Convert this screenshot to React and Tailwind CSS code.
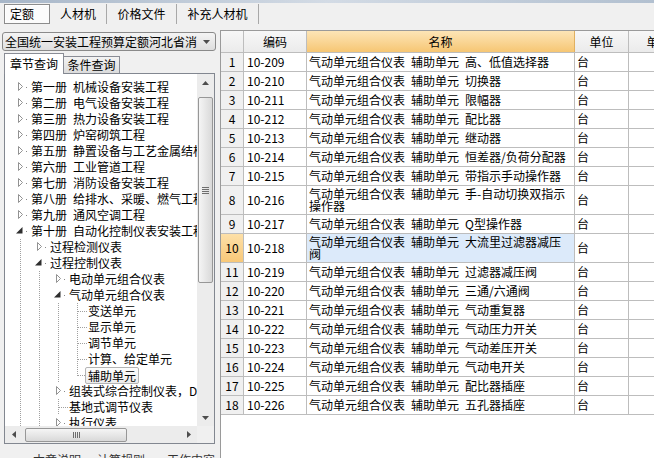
import React from 'react';

const names = [
  ['10-209', '高、低值选择器'],
  ['10-210', '切换器'],
  ['10-211', '限幅器'],
  ['10-212', '配比器'],
  ['10-213', '继动器'],
  ['10-214', '恒差器/负荷分配器'],
  ['10-215', '带指示手动操作器'],
  ['10-216', '手-自动切换双指示', '操作器'],
  ['10-217', 'Q型操作器'],
  ['10-218', '大流里过滤器减压', '阀'],
  ['10-219', '过滤器减压阀'],
  ['10-220', '三通/六通阀'],
  ['10-221', '气动重复器'],
  ['10-222', '气动压力开关'],
  ['10-223', '气动差压开关'],
  ['10-224', '气动电开关'],
  ['10-225', '配比器插座'],
  ['10-226', '五孔器插座'],
];

const PREFIX = '气动单元组合仪表\u2002辅助单元\u2002';

// c = collapsed, e = expanded, l = leaf, z = last leaf
const tree = [
  { d: 1, k: 'c', t: '第一册\u2002机械设备安装工程' },
  { d: 1, k: 'c', t: '第二册\u2002电气设备安装工程' },
  { d: 1, k: 'c', t: '第三册\u2002热力设备安装工程' },
  { d: 1, k: 'c', t: '第四册\u2002炉窑砌筑工程' },
  { d: 1, k: 'c', t: '第五册\u2002静置设备与工艺金属结构制作安装工程' },
  { d: 1, k: 'c', t: '第六册\u2002工业管道工程' },
  { d: 1, k: 'c', t: '第七册\u2002消防设备安装工程' },
  { d: 1, k: 'c', t: '第八册\u2002给排水、采暖、燃气工程' },
  { d: 1, k: 'c', t: '第九册\u2002通风空调工程' },
  { d: 1, k: 'e', t: '第十册\u2002自动化控制仪表安装工程' },
  { d: 2, k: 'c', t: '过程检测仪表' },
  { d: 2, k: 'e', t: '过程控制仪表' },
  { d: 3, k: 'c', t: '电动单元组合仪表' },
  { d: 3, k: 'e', t: '气动单元组合仪表' },
  { d: 4, k: 'l', t: '变送单元' },
  { d: 4, k: 'l', t: '显示单元' },
  { d: 4, k: 'l', t: '调节单元' },
  { d: 4, k: 'l', t: '计算、给定单元' },
  { d: 4, k: 'z', t: '辅助单元', sel: true },
  { d: 3, k: 'c', t: '组装式综合控制仪表，DDZ-S系列仪表' },
  { d: 3, k: 'l', t: '基地式调节仪表' },
  { d: 3, k: 'c', t: '执行仪表' },
];

function Guide() {
  return (
    <svg width="19" height="16" className="shrink-0">
      <line x1="9.5" y1="0" x2="9.5" y2="16" stroke="#a0a0a0" strokeDasharray="1 1" />
    </svg>
  );
}

function Joint({ k }) {
  return (
    <svg width="19" height="16" className="shrink-0">
      {k === 'c' && (
        <>
          <path d="M7.5 3.5 L11.5 7.5 L7.5 11.5 Z" fill="#fff" stroke="#929292" />
          <rect x="15" y="8" width="1" height="1" fill="#8a8a8a" />
        </>
      )}
      {k === 'e' && (
        <>
          <path d="M11.5 4 L11.5 10.5 L5 10.5 Z" fill="#2e2e2e" />
          <rect x="15" y="8" width="1" height="1" fill="#8a8a8a" />
        </>
      )}
      {(k === 'l' || k === 'z') && (
        <>
          <line x1="9.5" y1="0" x2="9.5" y2={k === 'z' ? 9 : 16} stroke="#a0a0a0" strokeDasharray="1 1" />
          <line x1="10" y1="8.5" x2="19" y2="8.5" stroke="#a0a0a0" strokeDasharray="1 1" />
        </>
      )}
    </svg>
  );
}

function TreeRow({ node }) {
  const guides = [];
  for (let i = 1; i < node.d; i++) guides.push(<Guide key={i} />);
  return (
    <div className="flex h-[16px] shrink-0 items-center pl-[6px] whitespace-pre">
      {guides}
      <Joint k={node.k} />
      {node.sel ? (
        <span className="-ml-[2px] px-[2px] leading-[15px] border border-[#b4b4b4] rounded-[2px] bg-gradient-to-b from-[#fdfdfd] to-[#ececec]">
          {node.t}
        </span>
      ) : (
        <span className="pl-[1px] leading-[16px]">{node.t}</span>
      )}
    </div>
  );
}

function Arrow({ dir }) {
  const d = {
    up: 'M0 4 L3.5 0 L7 4 Z',
    down: 'M0 0 L7 0 L3.5 4 Z',
    left: 'M4 0 L4 7 L0 3.5 Z',
    right: 'M0 0 L4 3.5 L0 7 Z',
  }[dir];
  const v = dir === 'up' || dir === 'down';
  return (
    <svg width={v ? 7 : 4} height={v ? 4 : 7} className="shrink-0">
      <path d={d} fill="#4d4d4d" />
    </svg>
  );
}

function TableRow({ n, code, a, b }) {
  const sel = n === 10;
  const tall = !!b;
  return (
    <div className={`flex shrink-0 border-b border-[#bdbdbd] ${tall ? 'h-[29px]' : 'h-[19px]'}`}>
      <div
        className={`w-[23px] shrink-0 flex items-center justify-center border-r border-[#bdbdbd] ${
          sel ? 'bg-gradient-to-b from-[#fde0a8] to-[#f8c878]' : 'bg-[#f0f0f0]'
        }`}
      >
        {n}
      </div>
      <div className="w-[63px] shrink-0 flex items-center pl-[3px] border-r border-[#bdbdbd]">{code}</div>
      <div
        className={`w-[268px] shrink-0 flex items-center pl-[2px] border-r border-[#bdbdbd] whitespace-pre ${
          sel ? 'bg-[#dceafa]' : ''
        }`}
      >
        {tall ? (
          <div className="leading-[12px]">
            {PREFIX + a}
            <br />
            {b}
          </div>
        ) : (
          <span>{PREFIX + a}</span>
        )}
      </div>
      <div className="w-[54px] shrink-0 flex items-center pl-[2px] border-r border-[#bdbdbd]">台</div>
      <div className="w-[60px] shrink-0 border-r border-[#bdbdbd]"></div>
    </div>
  );
}

export default function App() {
  return (
    <div className="w-[654px] h-[458px] overflow-hidden bg-[#f0f0f0] text-[12px] text-black font-['Noto_Sans_CJK_SC',sans-serif] flex flex-col">
      {/* window edge */}
      <div className="h-[3px] shrink-0 bg-gradient-to-r from-[#a7b6c8] via-[#d3dbe5] to-[#b2c0d0]"></div>

      {/* top tabs */}
      <div className="h-[24px] shrink-0 flex items-start pt-[1px] pl-[4px]">
        <div className="w-[46px] h-[20px] pl-[5px] flex items-center border border-[#8c8c8c] bg-[#fbfbfb] shadow-[inset_1px_1px_0_#ffffff]">定额</div>
        <div className="w-[57px] h-[20px] flex items-center justify-center border-r border-[#a8a8a8]">人材机</div>
        <div className="w-[70px] h-[20px] flex items-center justify-center border-r border-[#a8a8a8]">价格文件</div>
        <div className="w-[82px] h-[20px] flex items-center justify-center border-r border-[#a8a8a8]">补充人材机</div>
      </div>

      <div className="flex flex-1 min-h-0">
        {/* left panel */}
        <div className="w-[220px] shrink-0 flex flex-col overflow-hidden">
          <div className="mt-[5px] ml-[2px] w-[214px] h-[19px] shrink-0 flex items-center justify-between pl-[2px] pr-[5px] border border-[#8a8a8a] rounded-[3px] bg-gradient-to-b from-[#f4f4f4] to-[#dedede] whitespace-nowrap overflow-hidden">
            <span className="leading-[17px]">全国统一安装工程预算定额河北省消</span>
            <Arrow dir="down" />
          </div>

          <div className="mt-[2px] h-[20px] shrink-0 flex items-start pl-[4px]">
            <div className="relative z-10 w-[60px] h-[21px] flex items-center justify-center border-t border-l border-r border-[#898c95] bg-white">章节查询</div>
            <div className="mt-[3px] w-[56px] h-[17px] flex items-center justify-center border-t border-r border-[#898c95] bg-gradient-to-b from-[#f3f3f3] to-[#dcdcdc]">条件查询</div>
          </div>

          <div className="ml-[4px] w-[211px] h-[371px] shrink-0 border border-[#828790] bg-white flex flex-col">
            <div className="flex flex-1 min-h-0">
              <div className="flex-1 min-w-0 overflow-hidden pt-[5px]">
                {tree.map((n, i) => (
                  <TreeRow key={i} node={n} />
                ))}
              </div>
              {/* vertical scrollbar */}
              <div className="w-[17px] shrink-0 flex flex-col bg-[#ececec]">
                <div className="h-[17px] shrink-0 flex items-center justify-center">
                  <Arrow dir="up" />
                </div>
                <div className="h-[6px] shrink-0"></div>
                <div className="h-[186px] shrink-0 mx-[1px] rounded-[2px] border border-[#979797] bg-gradient-to-r from-[#f5f5f5] to-[#d9d9d9] flex flex-col items-center justify-center gap-[1px]">
                  <div className="w-[7px] h-[1px] bg-[#6e6e6e]"></div>
                  <div className="w-[7px] h-[1px] bg-[#6e6e6e]"></div>
                  <div className="w-[7px] h-[1px] bg-[#6e6e6e]"></div>
                  <div className="w-[7px] h-[1px] bg-[#6e6e6e]"></div>
                </div>
                <div className="flex-1"></div>
                <div className="h-[17px] shrink-0 flex items-center justify-center">
                  <Arrow dir="down" />
                </div>
              </div>
            </div>
            {/* horizontal scrollbar */}
            <div className="h-[17px] shrink-0 flex">
              <div className="flex-1 flex items-center bg-[#ececec]">
                <div className="w-[17px] h-full shrink-0 flex items-center justify-center">
                  <Arrow dir="left" />
                </div>
                <div className="w-[3px] shrink-0"></div>
                <div className="w-[102px] h-[14px] shrink-0 rounded-[2px] border border-[#979797] bg-gradient-to-b from-[#f5f5f5] to-[#d9d9d9] flex items-center justify-center gap-[1px]">
                  <div className="w-[1px] h-[6px] bg-[#6e6e6e]"></div>
                  <div className="w-[1px] h-[6px] bg-[#6e6e6e]"></div>
                  <div className="w-[1px] h-[6px] bg-[#6e6e6e]"></div>
                  <div className="w-[1px] h-[6px] bg-[#6e6e6e]"></div>
                </div>
                <div className="flex-1"></div>
                <div className="w-[17px] h-full shrink-0 flex items-center justify-center">
                  <Arrow dir="right" />
                </div>
              </div>
              <div className="w-[17px] bg-[#f0f0f0]"></div>
            </div>
          </div>

          <div className="mt-[7px] shrink-0 flex whitespace-nowrap text-[#333]">
            <span className="ml-[33px]">本章说明</span>
            <span className="ml-[16px]">计算规则</span>
            <span className="ml-[22px]">工作内容</span>
          </div>
        </div>

        {/* right panel: grid */}
        <div className="flex-1 min-w-0 pt-[3px]">
          <div className="h-full border-t border-l border-[#9a9a9a] bg-white overflow-hidden flex flex-col">
            <div className="flex h-[22px] shrink-0 border-b border-[#bdbdbd]">
              <div className="w-[23px] shrink-0 border-r border-[#bdbdbd] bg-gradient-to-b from-[#f7f7f7] to-[#ebebeb]"></div>
              <div className="w-[63px] shrink-0 flex items-center justify-center border-r border-[#bdbdbd] bg-gradient-to-b from-[#f7f7f7] to-[#ebebeb]">编码</div>
              <div className="w-[268px] shrink-0 flex items-center justify-center border-r border-[#e0b060] bg-gradient-to-b from-[#fde5b6] to-[#f6c673]">名称</div>
              <div className="w-[54px] shrink-0 flex items-center justify-center border-r border-[#bdbdbd] bg-gradient-to-b from-[#f7f7f7] to-[#ebebeb]">单位</div>
              <div className="w-[60px] shrink-0 flex items-center justify-center border-r border-[#bdbdbd] bg-gradient-to-b from-[#f7f7f7] to-[#ebebeb]">单价</div>
            </div>
            {names.map((r, i) => (
              <TableRow key={r[0]} n={i + 1} code={r[0]} a={r[1]} b={r[2]} />
            ))}
          </div>
        </div>
      </div>
    </div>
  );
}
